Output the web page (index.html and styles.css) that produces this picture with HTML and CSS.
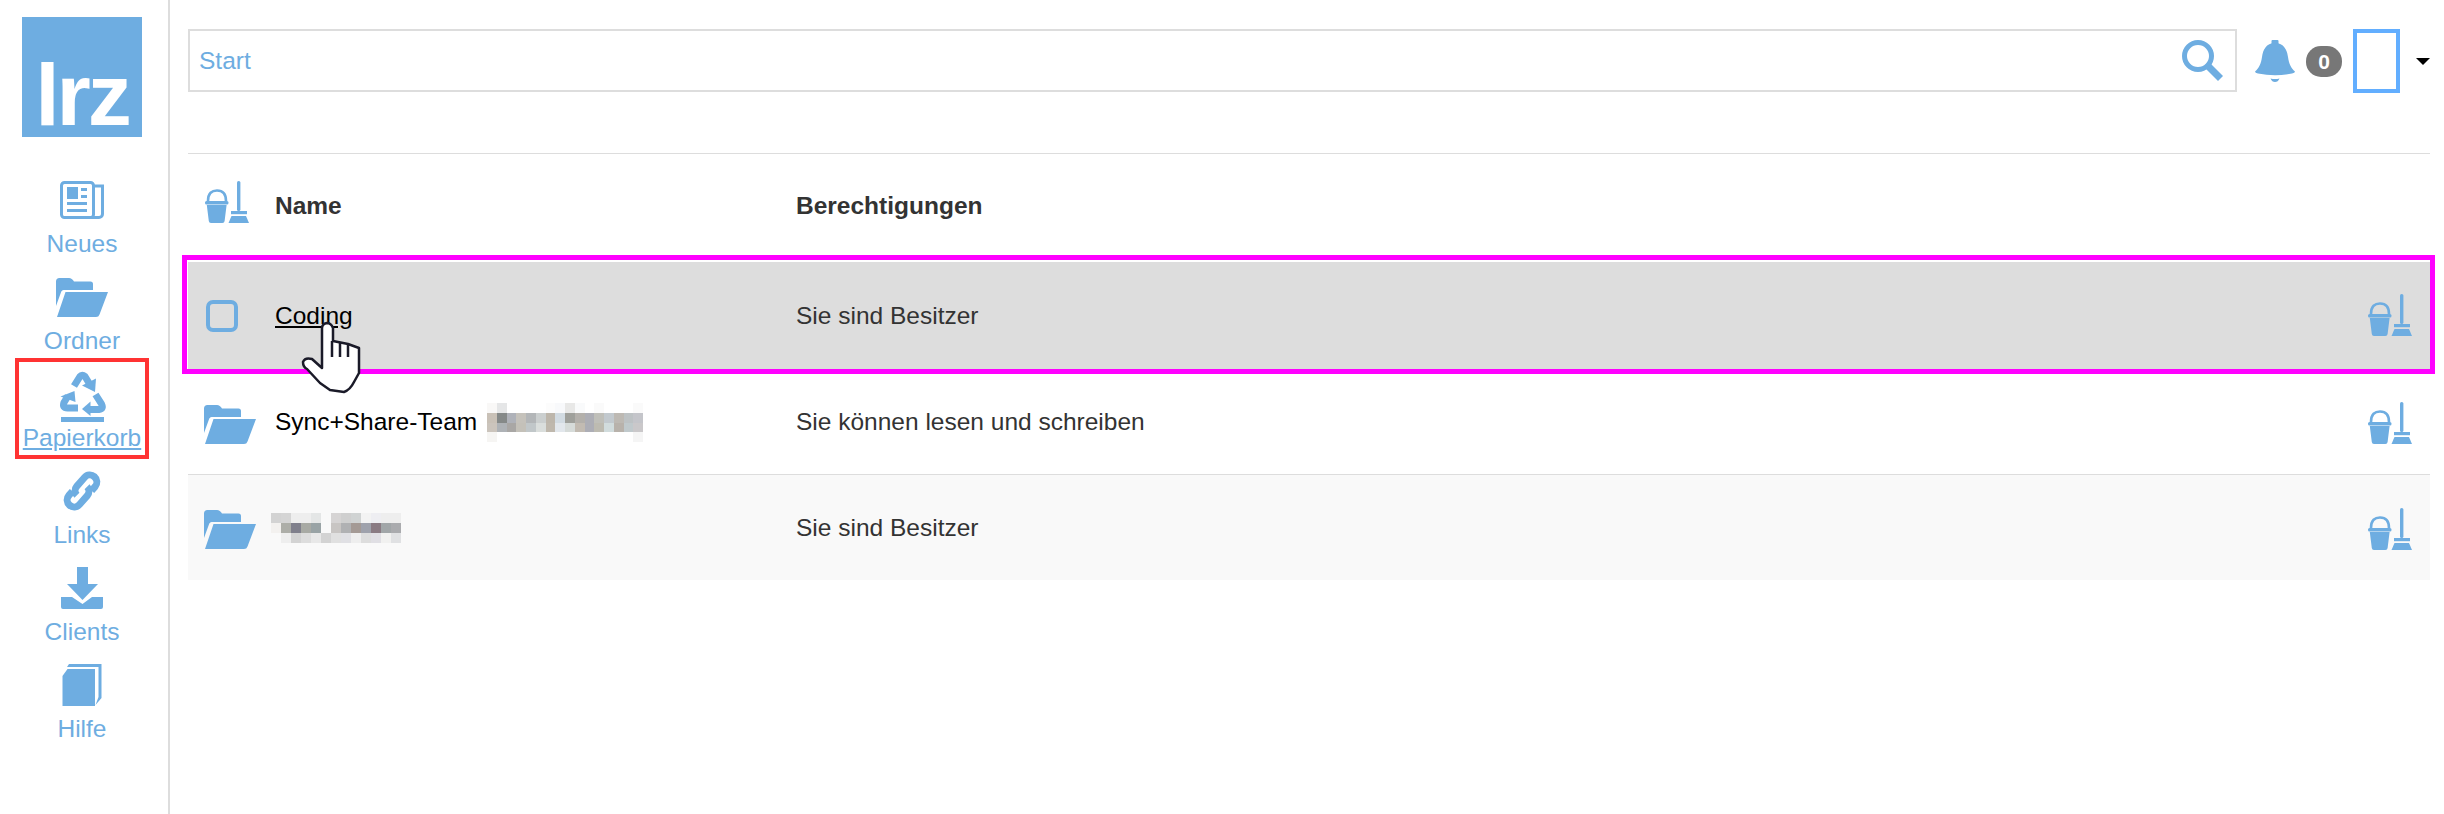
FILE: index.html
```html
<!DOCTYPE html>
<html lang="de">
<head>
<meta charset="utf-8">
<title>Sync+Share</title>
<link rel="stylesheet" href="styles.css">
</head>
<body>
<svg class="defs" width="0" height="0" aria-hidden="true">
  <defs>
    <symbol id="i-clean" viewBox="0 0 44 42">
      <path d="M3 20C3 12 7 9.500 12 9.500S21 12 21 20" fill="none" stroke="currentColor" stroke-width="2.600"/>
      <rect x="0" y="20" width="23.500" height="3.400" rx="1.500" fill="currentColor"/>
      <path d="M1.800 24H21.600L19.600 40Q19.400 42 17.400 42H6Q4 42 3.800 40Z" fill="currentColor"/>
      <rect x="32" y="0" width="3.400" height="30" rx="1.600" fill="currentColor"/>
      <rect x="26" y="30" width="16" height="3.200" fill="currentColor"/>
      <path d="M26.500 35H41L44 42H23.500Z" fill="currentColor"/>
    </symbol>
    <symbol id="i-folder" viewBox="0 0 52 39">
      <path d="M0 3.500A3.500 3.500 0 0 1 3.500 0H13Q16 0 18 3.500H34.500A2.500 2.500 0 0 1 37 6V12H7.500Q6 12 5.300 13.500L0 28Z" fill="currentColor"/>
      <path d="M9.500 14H52L43.500 36.500Q42.700 39 40 39H1Z" fill="currentColor"/>
    </symbol>
  </defs>
</svg>

<aside class="sidebar">
  <div class="logo"><span>lrz</span></div>
  <nav class="nav">
    <a class="nav-item">
      <span class="nav-icon">
        <svg width="44" height="38" viewBox="0 0 44 38">
          <rect x="1.500" y="1.500" width="32" height="35" rx="3" class="ol"/>
          <path d="M34 5H42.500V33A3.500 3.500 0 0 1 39 36.500H31" class="ol"/>
          <rect x="7" y="6" width="11" height="12" class="fl"/>
          <rect x="21" y="7" width="6" height="3" class="fl"/>
          <rect x="21" y="14" width="6" height="3" class="fl"/>
          <rect x="7" y="21" width="20" height="3" class="fl"/>
          <rect x="7" y="28" width="20" height="3" class="fl"/>
        </svg>
      </span>
      <span class="nav-label">Neues</span>
    </a>
    <a class="nav-item">
      <span class="nav-icon"><svg class="ic-folder"><use href="#i-folder"/></svg></span>
      <span class="nav-label">Ordner</span>
    </a>
    <a class="nav-item">
      <span class="nav-icon">
        <svg width="60" height="60" viewBox="0 0 60 60">
          <path d="M22 22L28 12.500Q30 10 33 12.500L37 19" class="st7"/>
          <path d="M30 21.500L44 14.500L43 28Z" class="fl"/>
          <path d="M26 44H15.500Q10 44 12 38.500L16 32" class="st7"/>
          <path d="M8.500 32.500L22.500 27L23.500 38Z" class="fl"/>
          <path d="M43.500 30.500L49.500 40Q52 45 47 45.500H36" class="st7"/>
          <path d="M38.500 37.500V52L30 45Z" class="fl"/>
          <rect x="9" y="53" width="43" height="5" class="fl"/>
        </svg>
      </span>
      <span class="nav-label nav-label-hover">Papierkorb</span>
    </a>
    <a class="nav-item">
      <span class="nav-icon">
        <svg width="44" height="44" viewBox="-22 -22 44 44">
          <g transform="rotate(-49) scale(1.080)" class="chain">
            <path d="M-6 -1A6 6 0 0 1 0 -6.500H11A6.500 6.500 0 0 1 11 6.500H6"/>
            <path d="M6 1A6 6 0 0 1 0 6.500H-11A6.500 6.500 0 0 1 -11 -6.500H-6"/>
          </g>
        </svg>
      </span>
      <span class="nav-label">Links</span>
    </a>
    <a class="nav-item">
      <span class="nav-icon">
        <svg width="42" height="42" viewBox="0 0 42 42">
          <path d="M16 0H27V17H37L21.500 33L6 17H16Z" class="fl"/>
          <path d="M0 30H11L21.500 37L31 30H42V40A2 2 0 0 1 40 42H2A2 2 0 0 1 0 40Z" class="fl"/>
        </svg>
      </span>
      <span class="nav-label">Clients</span>
    </a>
    <a class="nav-item">
      <span class="nav-icon">
        <svg width="40" height="42" viewBox="0 0 40 42">
          <path d="M0.500 12L5.500 5H33V42H0.500Z" class="fl"/>
          <path d="M5 3L7 0H39.500V34L33.500 41L36.500 33V3Z" class="fl"/>
        </svg>
      </span>
      <span class="nav-label">Hilfe</span>
    </a>
  </nav>
</aside>

<main class="main">
  <header class="topbar">
    <div class="search">
      <span class="search-text">Start</span>
      <svg width="42" height="42" viewBox="0 0 42 42" class="search-icon">
        <circle cx="16" cy="16" r="13.500" fill="none" stroke="currentColor" stroke-width="5"/>
        <path d="M26 26L38.500 38.500" stroke="currentColor" stroke-width="7" fill="none"/>
      </svg>
    </div>
    <svg width="40" height="42" viewBox="0 0 40 42" class="bell">
      <rect x="16.500" y="0" width="7" height="5" rx="1" class="fl"/>
      <path d="M20 3C29 3 32 10 33 17C34 24 36 28 40 31.500Q40 33 37 33.500Q20 37 3 33.500Q0 33 0 31.500C4 28 6 24 7 17C8 10 11 3 20 3Z" class="fl"/>
      <path d="M15.500 38.500Q20 39.500 24.500 38.500Q23 42 20 42T15.500 38.500Z" class="fl"/>
    </svg>
    <span class="badge">0</span>
    <span class="avatar"></span>
    <span class="caret"></span>
  </header>

  <section class="table">
    <div class="row row-head">
      <div class="cell-icon cell-icon-head"><svg class="ic-clean ic-clean-head"><use href="#i-clean"/></svg></div>
      <div class="col-head">Name</div>
      <div class="col-head">Berechtigungen</div>
      <div></div>
    </div>
    <div class="row row-active">
      <div class="cell-icon"><span class="checkbox"></span></div>
      <div class="name"><a class="name-link">Coding</a></div>
      <div class="perm">Sie sind Besitzer</div>
      <div class="cell-end"><svg class="ic-clean"><use href="#i-clean"/></svg></div>
    </div>
    <div class="row row-plain">
      <div class="cell-icon"><svg class="ic-folder"><use href="#i-folder"/></svg></div>
      <div class="name">Sync+Share-Team
        <svg class="mosaic mosaic-a" width="160" height="39" viewBox="0 0 16 4" shape-rendering="crispEdges">
          <rect x="0" y="0" width="1" height="1" fill="#f9f8f7"/><rect x="1" y="0" width="1" height="1" fill="#e5e6e7"/><rect x="6" y="0" width="1" height="1" fill="#fcfcfc"/><rect x="7" y="0" width="1" height="1" fill="#f8f9fb"/><rect x="8" y="0" width="1" height="1" fill="#e8e8e7"/><rect x="9" y="0" width="1" height="1" fill="#f9fafb"/><rect x="11" y="0" width="1" height="1" fill="#fafafa"/><rect x="15" y="0" width="1" height="1" fill="#fafafa"/>
          <rect x="0" y="1" width="1" height="1" fill="#c9c1b7"/><rect x="1" y="1" width="1" height="1" fill="#858988"/><rect x="2" y="1" width="1" height="1" fill="#afb2b9"/><rect x="3" y="1" width="1" height="1" fill="#c5c2bb"/><rect x="4" y="1" width="1" height="1" fill="#b3b6b8"/><rect x="5" y="1" width="1" height="1" fill="#cbcfcf"/><rect x="6" y="1" width="1" height="1" fill="#bdb6ab"/><rect x="7" y="1" width="1" height="1" fill="#d2dbe2"/><rect x="8" y="1" width="1" height="1" fill="#9fa09b"/><rect x="9" y="1" width="1" height="1" fill="#b3b0ab"/><rect x="10" y="1" width="1" height="1" fill="#adaeb5"/><rect x="11" y="1" width="1" height="1" fill="#bfbfb9"/><rect x="12" y="1" width="1" height="1" fill="#c2c9ce"/><rect x="13" y="1" width="1" height="1" fill="#bdb9b3"/><rect x="14" y="1" width="1" height="1" fill="#bdc2c4"/><rect x="15" y="1" width="1" height="1" fill="#c4c5ca"/>
          <rect x="0" y="2" width="1" height="1" fill="#cbc4bc"/><rect x="1" y="2" width="1" height="1" fill="#aeb2b6"/><rect x="2" y="2" width="1" height="1" fill="#a9a7a5"/><rect x="3" y="2" width="1" height="1" fill="#c4c1b9"/><rect x="4" y="2" width="1" height="1" fill="#c1c7c9"/><rect x="5" y="2" width="1" height="1" fill="#dadedc"/><rect x="6" y="2" width="1" height="1" fill="#bfb8ad"/><rect x="7" y="2" width="1" height="1" fill="#e2e7ec"/><rect x="8" y="2" width="1" height="1" fill="#d6dbd9"/><rect x="9" y="2" width="1" height="1" fill="#c2bbb2"/><rect x="10" y="2" width="1" height="1" fill="#adaeb6"/><rect x="11" y="2" width="1" height="1" fill="#bdbbb1"/><rect x="12" y="2" width="1" height="1" fill="#d1dcdd"/><rect x="13" y="2" width="1" height="1" fill="#b8b2ab"/><rect x="14" y="2" width="1" height="1" fill="#c0c9cc"/><rect x="15" y="2" width="1" height="1" fill="#cac8ca"/>
          <rect x="0" y="3" width="1" height="1" fill="#f6f5f3"/><rect x="15" y="3" width="1" height="1" fill="#f5f5f5"/>
        </svg>
      </div>
      <div class="perm">Sie können lesen und schreiben</div>
      <div class="cell-end"><svg class="ic-clean"><use href="#i-clean"/></svg></div>
    </div>
    <div class="row row-striped">
      <div class="cell-icon"><svg class="ic-folder"><use href="#i-folder"/></svg></div>
      <div class="name">
        <svg class="mosaic mosaic-b" width="130" height="30" viewBox="0 0 13 3" shape-rendering="crispEdges">
          <rect x="0" y="0" width="1" height="1" fill="#d3d3d3"/><rect x="1" y="0" width="1" height="1" fill="#d5d5d5"/><rect x="2" y="0" width="1" height="1" fill="#eeeeee"/><rect x="3" y="0" width="1" height="1" fill="#eeeeee"/><rect x="4" y="0" width="1" height="1" fill="#e4e6e6"/><rect x="6" y="0" width="1" height="1" fill="#d6d4d4"/><rect x="7" y="0" width="1" height="1" fill="#cfcfcf"/><rect x="8" y="0" width="1" height="1" fill="#d0d3d3"/><rect x="9" y="0" width="1" height="1" fill="#f3f3f3"/><rect x="10" y="0" width="1" height="1" fill="#eeeef2"/><rect x="11" y="0" width="1" height="1" fill="#eeeeee"/><rect x="12" y="0" width="1" height="1" fill="#eeeeee"/>
          <rect x="0" y="1" width="1" height="1" fill="#f3f1ef"/><rect x="1" y="1" width="1" height="1" fill="#adaea8"/><rect x="2" y="1" width="1" height="1" fill="#80808c"/><rect x="3" y="1" width="1" height="1" fill="#a8aaa4"/><rect x="4" y="1" width="1" height="1" fill="#99a3a5"/><rect x="6" y="1" width="1" height="1" fill="#c8c5c3"/><rect x="7" y="1" width="1" height="1" fill="#b0b1b3"/><rect x="8" y="1" width="1" height="1" fill="#a49a95"/><rect x="9" y="1" width="1" height="1" fill="#9fa2ac"/><rect x="10" y="1" width="1" height="1" fill="#8a7b83"/><rect x="11" y="1" width="1" height="1" fill="#a1a6a8"/><rect x="12" y="1" width="1" height="1" fill="#aaabae"/>
          <rect x="1" y="2" width="1" height="1" fill="#eeeeee"/><rect x="2" y="2" width="1" height="1" fill="#d3d3d3"/><rect x="3" y="2" width="1" height="1" fill="#dddddd"/><rect x="4" y="2" width="1" height="1" fill="#e8e8e8"/><rect x="5" y="2" width="1" height="1" fill="#d3d3d3"/><rect x="6" y="2" width="1" height="1" fill="#e0e0e0"/><rect x="7" y="2" width="1" height="1" fill="#e0e0e4"/><rect x="8" y="2" width="1" height="1" fill="#eeeeee"/><rect x="9" y="2" width="1" height="1" fill="#dddddd"/><rect x="10" y="2" width="1" height="1" fill="#e0dfe4"/><rect x="11" y="2" width="1" height="1" fill="#f1f1f0"/><rect x="12" y="2" width="1" height="1" fill="#e0e1e3"/>
        </svg>
      </div>
      <div class="perm">Sie sind Besitzer</div>
      <div class="cell-end"><svg class="ic-clean"><use href="#i-clean"/></svg></div>
    </div>
  </section>
</main>

<div class="mark mark-red"></div>
<div class="mark mark-pink"></div>
<svg class="cursor" width="70" height="85" viewBox="0 0 70 85">
  <path d="M22 58L12 49Q5 47 3 52Q3 57 7 59L20 73L30 80L44 82Q50 80 54 72L59 63V38L48 34L33 31V18Q31 13 27 13Q22 14 22 18Z" fill="#fff" stroke="#1a1a28" stroke-width="2.500" stroke-linejoin="round"/>
  <path d="M32 31V47M40 33V47M48 34V47" fill="none" stroke="#1a1a28" stroke-width="2.500"/>
</svg>
</body>
</html>
```

FILE: styles.css
```css
* {
  box-sizing: border-box;
}

html, body {
  margin: 0;
  height: 814px;
  background: #fff;
  overflow: hidden;
}

body {
  position: relative;
  display: flex;
  font-family: "Liberation Sans", Arial, sans-serif;
  font-size: 24.500px;
  color: #333;
}

.defs {
  position: absolute;
}

.fl {
  fill: #6eade1;
}

.ol {
  fill: none;
  stroke: #6eade1;
  stroke-width: 3;
}

.st7 {
  fill: none;
  stroke: #6eade1;
  stroke-width: 7;
}

.chain {
  fill: none;
  stroke: #6eade1;
  stroke-width: 6.500;
  stroke-linecap: butt;
}

/* Sidebar */
.sidebar {
  flex: 0 0 170px;
  border-right: 2px solid #ddd;
  padding: 17px 4px 0 0;
  display: flex;
  flex-direction: column;
  align-items: center;
}

.logo {
  width: 120px;
  height: 120px;
  background: #6eade1;
  color: #fff;
  font-weight: 700;
  font-size: 88px;
  line-height: 84px;
  letter-spacing: -3px;
  display: flex;
  align-items: flex-end;
  justify-content: center;
  margin-bottom: 35px;
}

.nav {
  display: flex;
  flex-direction: column;
  gap: 9px;
}

.nav-item {
  display: flex;
  flex-direction: column;
  align-items: center;
  color: #6eade1;
}

.nav-icon {
  height: 56px;
  display: flex;
  align-items: center;
  justify-content: center;
}

.nav-label {
  height: 32px;
  line-height: 32px;
}

.nav-label-hover {
  text-decoration: underline;
}

.ic-folder {
  width: 52px;
  height: 39px;
  color: #6eade1;
  display: block;
}

.ic-clean {
  width: 44px;
  height: 42px;
  color: #6eade1;
  display: block;
}

.ic-clean-head {
  margin-left: 1px;
}

/* Main */
.main {
  flex: 1;
  padding: 29px 14px 0 18px;
  min-width: 0;
}

.topbar {
  height: 64px;
  display: flex;
  align-items: center;
}

.search {
  flex: 1;
  height: 63px;
  align-self: flex-start;
  border: 2px solid #ddd;
  padding: 0 11px 0 9px;
  display: flex;
  align-items: center;
  justify-content: space-between;
  color: #6eade1;
  margin-right: 18px;
}

.search-icon {
  display: block;
}

.bell {
  display: block;
  margin-right: 11px;
}

.badge {
  width: 36px;
  height: 31px;
  border-radius: 15px;
  background: #777;
  color: #fff;
  font-size: 21px;
  font-weight: 700;
  line-height: 31px;
  text-align: center;
  margin-right: 11px;
}

.avatar {
  width: 47px;
  height: 64px;
  border: 4px solid #62aeff;
  margin-right: 16px;
}

.caret {
  width: 0;
  height: 0;
  border-left: 7px solid transparent;
  border-right: 7px solid transparent;
  border-top: 7px solid #000;
  margin-top: 1px;
}

/* Table */
.table {
  margin-top: 60px;
  border-top: 1px solid #ddd;
}

.row {
  display: grid;
  grid-template-columns: 87px 521px 1fr 62px;
  align-items: center;
}

.row-head {
  height: 108px;
}

.row-active {
  height: 108px;
  background: #ddd;
  border-bottom: 1px solid #fff;
}

.row-plain {
  height: 105px;
  border-bottom: 1px solid #ddd;
}

.row-striped {
  height: 105px;
  background: #f9f9f9;
}

.cell-icon {
  padding-left: 16px;
}

.cell-icon-head {
  margin-bottom: 12px;
}

.row-plain .cell-icon,
.row-striped .cell-icon {
  margin-top: 4px;
}

.row-plain .cell-end,
.row-striped .cell-end {
  margin-top: 2px;
}

.row-active .cell-end {
  margin-bottom: 2px;
}

.cell-end {
  justify-self: start;
}

.col-head {
  font-weight: 700;
  margin-bottom: 4px;
}

.name {
  color: #000;
  display: flex;
  align-items: center;
  gap: 8px;
}

.name-link {
  text-decoration: underline;
}

.perm {
  color: #333;
}

.checkbox {
  display: block;
  width: 32px;
  height: 32px;
  border: 4px solid #6eade1;
  border-radius: 7px;
  margin-left: 2px;
}

.mosaic {
  display: block;
}

.mosaic-b {
  margin-left: -4px;
}

/* Annotations laid over the screenshot */
.mark {
  position: absolute;
  pointer-events: none;
}

.mark-red {
  left: 15px;
  top: 358px;
  width: 134px;
  height: 101px;
  border: 4px solid #f33;
}

.mark-pink {
  left: 182px;
  top: 255px;
  width: 2253px;
  height: 119px;
  border: 5px solid #f0f;
}

.cursor {
  position: absolute;
  left: 300px;
  top: 310px;
}
```
